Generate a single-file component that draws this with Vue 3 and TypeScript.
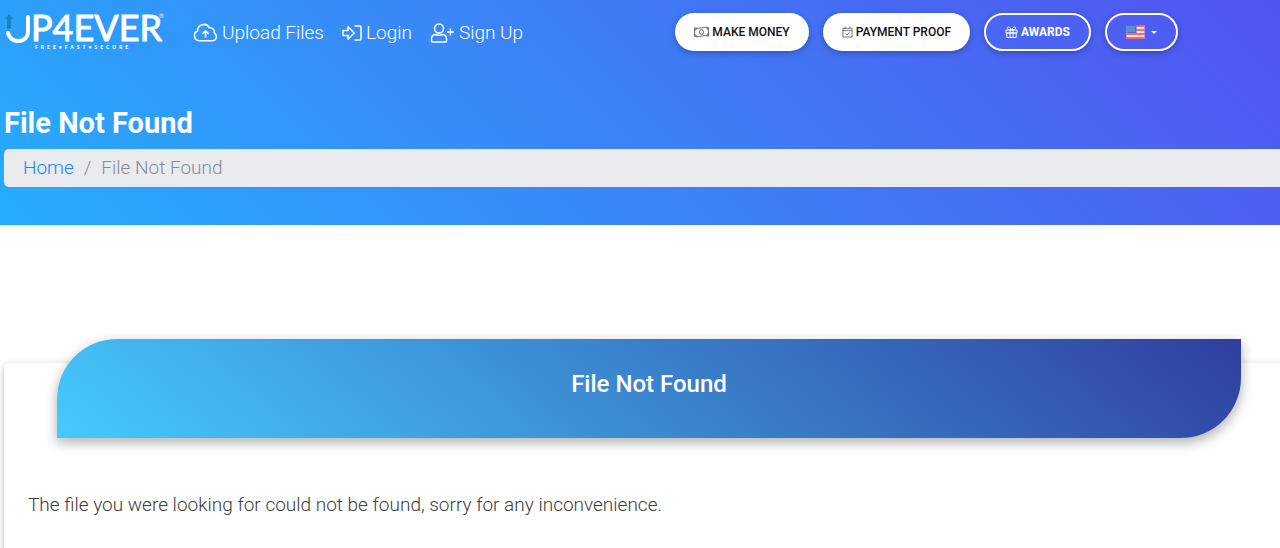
<script setup lang="ts">
import { ref } from 'vue'

const title = ref<string>('File Not Found')
const stripes: number[] = [0, 1, 2, 3]
</script>

<template>
  <div class="page">
    <header class="hero">
      <nav class="navbar" aria-label="Main">
        <a class="brand" href="#" aria-label="JP4EVER home">
          <svg width="160" height="44" viewBox="0 0 160 44" aria-hidden="true">
            <path d="M3 19V9H1l4-5 4 5H7v10z" fill="#1487bd" />
            <path d="M4 23c1 5 5 8 10 8 6 0 10-4 10-10V7" fill="none" stroke="#fff" stroke-width="4" stroke-linecap="round" />
            <text class="wordmark" x="27" y="31">P4EVER</text>
            <text class="mark" x="155" y="8">®</text>
            <text class="tagline" x="31" y="39">FREE•FAST•SECURE</text>
          </svg>
        </a>
        <div class="links">
          <a href="#">
            <svg class="ico cloud" viewBox="0 0 24 18">
              <path d="M6 16.5a5 5 0 0 1-1.500-9.600A6 6 0 0 1 15.800 4a4 4 0 0 1 4.500 5A4 4 0 0 1 19 16.500zM12 13.500V7M9 9.800 12 6.800l3 3" />
            </svg>Upload Files</a>
          <a href="#">
            <svg class="ico login" viewBox="0 0 20 18">
              <path d="M1 6.500h5V2.800L12.200 9 6 15.200v-3.700H1zM12.500 2H18a1 1 0 0 1 1 1v12a1 1 0 0 1-1 1h-5.500" />
            </svg>Login</a>
          <a href="#">
            <svg class="ico cloud" viewBox="0 0 24 20">
              <circle cx="8.500" cy="5.500" r="4.500" />
              <path d="M5.500 11.500c1 .5 2 .7 3 .7s2-.2 3-.7c2.800 0 4.500 2 4.500 4.500v2a1 1 0 0 1-1 1H2a1 1 0 0 1-1-1v-2c0-2.500 1.700-4.500 4.500-4.500zM20 5.500v7M16.500 9h7" />
            </svg>Sign Up</a>
        </div>
        <div class="actions">
          <a class="pill solid" href="#">
            <svg class="ico money" viewBox="0 0 15 12">
              <path d="M.5 1.800c4.500 2 9-2 14 0v8.400c-5-2-9.500 2-14 0zM.5 4.200q2 0 2-2M14.500 7.800q-2 0-2 2M.5 8.500q1.500 0 2 2M14.500 3.500q-1.500 0-2-2" />
              <ellipse cx="7.500" cy="6" rx="2" ry="2.500" />
            </svg>MAKE MONEY</a>
          <a class="pill solid" href="#">
            <svg class="ico small" viewBox="0 0 12 12">
              <path d="M1 2h10v9.500H1zM1 4.500h10M3.500 0v2M8.500 0v2M4 7.800l1.500 1.400L8.300 6.500" />
            </svg>PAYMENT PROOF</a>
          <a class="pill outline" href="#">
            <svg class="ico gift" viewBox="0 0 12 12">
              <path d="M.5 4h11v3H.5zM1.300 7h9.400v4.500H1.300zM4.500 4v7.500M7.500 4v7.500M6 4C4 0 1.500.5 2 2.500 2.200 3.600 4 4 6 4c2 0 3.800-.4 4-1.500C10.500.5 8 0 6 4z" />
            </svg>AWARDS</a>
          <button class="pill outline language" type="button" aria-label="Language: English">
            <svg class="flag" viewBox="0 0 18 14">
              <path d="M0 0h18v14H0z" fill="#f3dce7" />
              <path v-for="s in stripes" :key="s" :d="`M0 ${s * 4}h18v2H0z`" fill="#ed6d6e" />
              <path d="M0 0h10v8H0z" fill="#397bc4" />
              <path d="M1 2h8M1 4h8M1 6h8" stroke="#b9d8f4" stroke-dasharray="1 1" />
            </svg>
            <span class="caret"></span>
          </button>
        </div>
      </nav>
      <h1>{{ title }}</h1>
      <ol class="breadcrumb" aria-label="Breadcrumb">
        <li><a href="#">Home</a></li>
        <li class="slash" aria-hidden="true">/</li>
        <li aria-current="page">{{ title }}</li>
      </ol>
    </header>
    <main>
      <section class="card">
        <div class="banner"><h2>{{ title }}</h2></div>
        <p>The file you were looking for could not be found, sorry for any inconvenience.</p>
      </section>
    </main>
  </div>
</template>

<style>
body {
  background: #fff;
}
</style>

<style scoped>
.page {
  font-family: Roboto, sans-serif;
  font-weight: 300;
  font-size: 19px;
  line-height: 28px;
  color: #212529;
  min-height: 100vh;
  overflow: hidden;
}
.page * {
  box-sizing: border-box;
}
a {
  color: inherit;
  text-decoration: none;
}
.hero {
  background: linear-gradient(45deg, #26adfd, #5353f0);
  padding: 0 0 38px 4px;
  color: #fff;
}
.navbar {
  display: flex;
  align-items: center;
  height: 64px;
  padding-right: 102px;
}
.brand,
.brand svg {
  display: block;
}
.brand svg {
  overflow: visible;
}
.wordmark {
  font: 400 36px Lato, sans-serif;
  fill: #fff;
  stroke: #fff;
  stroke-width: 1px;
  stroke-linejoin: round;
}
.mark {
  font: 400 6px Lato, sans-serif;
  fill: #fff;
}
.tagline {
  font: 900 5px Lato, sans-serif;
  letter-spacing: 3px;
  fill: #fff;
}
.links {
  display: flex;
  gap: 18px;
  margin-left: 29px;
}
.links a {
  display: flex;
  align-items: center;
  gap: 4px;
  line-height: 30px;
  padding-top: 1px;
}
.ico {
  fill: none;
  stroke: currentColor;
  stroke-width: 1;
  stroke-linejoin: round;
}
.links .ico {
  width: 20px;
  height: 20px;
  stroke-width: 1.5;
}
.links .cloud {
  width: 25px;
}
.actions {
  display: flex;
  gap: 14px;
  margin-left: auto;
}
.pill {
  display: flex;
  align-items: center;
  justify-content: center;
  gap: 3px;
  height: 38px;
  padding: 0 19px;
  border: 0;
  border-radius: 19px;
  font: 500 12px Roboto, sans-serif;
  box-shadow: 0 2px 5px rgba(0, 0, 0, 0.16), 0 2px 10px rgba(0, 0, 0, 0.12);
}
.solid {
  background: #fff;
  color: #111;
}
.solid .ico {
  stroke: #444;
  stroke-width: 0.8;
}
.outline {
  border: 2px solid #fff;
  background: transparent;
  color: #fff;
  font-weight: 700;
}
.money {
  width: 15px;
  height: 12px;
}
.small {
  width: 11px;
  height: 12px;
}
.gift {
  width: 13px;
  height: 12px;
}
.language {
  gap: 6px;
}
.flag {
  width: 19px;
  height: 14px;
}
.caret {
  border: 3px solid transparent;
  border-top-color: #fff;
  border-bottom: 0;
}
h1 {
  margin: 41px 0 8px;
  font-size: 29px;
  line-height: 36px;
  font-weight: 700;
}
.breadcrumb {
  display: flex;
  gap: 10px;
  margin: 0;
  padding: 5px 19px;
  list-style: none;
  background: #e9ebef;
  border-radius: 5px 0 0 5px;
  color: #868b90;
}
.breadcrumb a {
  color: #1687f8;
}
main {
  padding: 138px 0 0 4px;
}
.card {
  margin-right: -16px;
  padding: 0 24px 40px;
  border-radius: 5px;
  background: #fff;
  box-shadow: 0 2px 5px rgba(0, 0, 0, 0.16), 0 2px 10px rgba(0, 0, 0, 0.12);
}
.banner {
  position: relative;
  top: -24px;
  margin: 0 31px 0 29px;
  padding: 30px 16px 39px;
  border-radius: 60px 0;
  background: linear-gradient(40deg, #45cafc, #303f9f);
  box-shadow: 0 5px 11px rgba(0, 0, 0, 0.18), 0 4px 15px rgba(0, 0, 0, 0.15);
  color: #fff;
  text-align: center;
}
h2 {
  margin: 0;
  font-size: 24px;
  line-height: 30px;
  font-weight: 500;
}
.card p {
  margin: 29px 0 0;
  color: #3c3c3c;
}
</style>
